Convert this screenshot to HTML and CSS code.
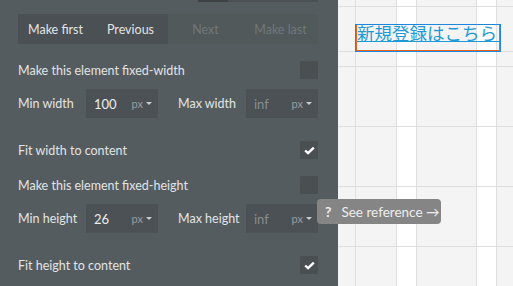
FILE: index.html
```html
<!DOCTYPE html>
<html lang="ja">
<head>
  <meta charset="UTF-8" />
  <title>Layout</title>
  <link rel="stylesheet" href="styles.css">
</head>
<body>
  <div class="screen">
    <aside class="panel">
      <div class="topbar">
        <span class="seg dark"></span>
        <span class="seg"></span>
      </div>

      <div class="btngroup">
        <div class="half on">
          <span class="btn">Make first</span>
          <span class="btn">Previous</span>
        </div>
        <div class="half off">
          <span class="btn">Next</span>
          <span class="btn">Make last</span>
        </div>
      </div>

      <div class="row check first">
        <span>Make this element fixed-width</span>
        <span class="box"></span>
      </div>
      <div class="row field">
        <span class="lbl">Min width</span>
        <span class="input"><span class="val">100</span><span class="unit">px <i class="caret"></i></span></span>
        <span class="lbl second">Max width</span>
        <span class="input"><span class="val ph">inf</span><span class="unit">px <i class="caret"></i></span></span>
      </div>
      <div class="row check after-field">
        <span>Fit width to content</span>
        <span class="box"><svg viewBox="0 0 12 10" width="11" height="9"><path d="M1.2 5 L4.4 8 L10.8 1.8" fill="none" stroke="#fff" stroke-width="2.6"/></svg></span>
      </div>
      <div class="row check">
        <span>Make this element fixed-height</span>
        <span class="box"></span>
      </div>
      <div class="row field">
        <span class="lbl">Min height</span>
        <span class="input"><span class="val">26</span><span class="unit">px <i class="caret"></i></span></span>
        <span class="lbl second">Max height</span>
        <span class="input"><span class="val ph">inf</span><span class="unit">px <i class="caret"></i></span></span>
      </div>
      <div class="row check after-field">
        <span>Fit height to content</span>
        <span class="box"><svg viewBox="0 0 12 10" width="11" height="9"><path d="M1.2 5 L4.4 8 L10.8 1.8" fill="none" stroke="#fff" stroke-width="2.6"/></svg></span>
      </div>
    </aside>

    <section class="canvas">
      <div class="element">
        <div class="inner"><span class="jp">新規登録はこちら</span></div>
      </div>
    </section>

    <div class="tip"><b>?</b> See reference &rarr;</div>
  </div>
</body>
</html>
```

FILE: styles.css
```css
body {
  margin: 0;
  font-family: Lato, "Open Sans", sans-serif;
  font-size: 12.5px;
  color: #e2e4e5;
}
.screen {
  position: relative;
  display: flex;
  width: 513px;
  height: 286px;
  overflow: hidden;
}
.panel {
  width: 338px;
  flex: none;
  background: #555c5f;
  padding: 0 20px 0 18px;
  box-sizing: border-box;
}
.topbar {
  display: flex;
  height: 2px;
  margin-left: 180px;
}
.seg { flex: 1; background: #4a5053; }
.seg.dark { flex: none; width: 30px; background: #3e4244; }

.btngroup {
  display: flex;
  height: 30px;
  margin-top: 12px;
  background: #52595b;
  border-radius: 2px;
}
.half {
  display: flex;
}
.btn {
  width: 75px;
  display: flex;
  align-items: center;
  justify-content: center;
}
.half.on { background: #4a5053; color: #e2e4e5; }
.half.off { color: #70777a; }

.row {
  display: flex;
  align-items: center;
}
.check {
  height: 18px;
  justify-content: space-between;
  margin-top: 17px;
}
.check.after-field { margin-top: 23px; }
.box {
  width: 18px;
  height: 18px;
  background: #4a4f52;
  border-radius: 1px;
  display: flex;
  align-items: center;
  justify-content: center;
}
.field {
  height: 29px;
  margin-top: 10px;
}
.lbl { width: 68px; }
.lbl.second { margin-left: 20px; }
.input {
  width: 72px;
  height: 29px;
  background: #4b5154;
  display: flex;
  align-items: center;
  justify-content: space-between;
  padding: 0 6px 0 8px;
  box-sizing: border-box;
  font-size: 13px;
}
.val { color: #eceeef; }
.val.ph { color: #868d90; }
.unit {
  color: #979ea1;
  font-size: 11px;
  display: flex;
  align-items: center;
}
.caret {
  display: inline-block;
  margin-left: 3px;
  border-left: 3px solid transparent;
  border-right: 3px solid transparent;
  border-top: 3px solid #c9cdcf;
}

.canvas {
  position: relative;
  flex: 1;
  background-color: #f4f4f4;
  background-image:
    linear-gradient(#dedede, #dedede),
    linear-gradient(#dedede, #dedede),
    linear-gradient(#dedede, #dedede),
    linear-gradient(#dedede, #dedede),
    linear-gradient(#dedede, #dedede),
    linear-gradient(#dedede, #dedede),
    linear-gradient(#dedede, #dedede),
    linear-gradient(#dedede, #dedede),
    linear-gradient(#dedede, #dedede),
    linear-gradient(#dedede, #dedede),
    linear-gradient(#dedede, #dedede),
    linear-gradient(#fff, #fff),
    linear-gradient(#fff, #fff);
  background-repeat: no-repeat;
  background-size:
    100% 1px, 100% 1px, 100% 1px, 100% 1px, 100% 1px, 100% 1px,
    1px 100%, 1px 100%, 1px 100%, 1px 100%, 1px 100%,
    20px 100%, 20px 100%;
  background-position:
    0 6px, 0 51px, 0 66px, 0 126px, 0 186px, 0 246px,
    17px 0, 58px 0, 78px 0, 138px 0, 158px 0,
    58px 0, 138px 0;
}
.element {
  position: absolute;
  left: 17px;
  top: 24px;
  width: 146px;
  height: 28px;
  border: 1px solid #1e86dc;
  box-sizing: border-box;
}
.inner {
  height: 100%;
  border: 1px solid #e8661e;
  border-top: none;
  box-sizing: border-box;
}
.jp {
  display: block;
  font-family: "Noto Sans CJK JP", sans-serif;
  font-size: 17.5px;
  line-height: 16px;
  color: #1f9ad6;
  white-space: nowrap;
  border-bottom: 1px solid #1f9ad6;
}

.tip {
  position: absolute;
  left: 317px;
  top: 199px;
  width: 124px;
  height: 25px;
  background: #858585;
  border-radius: 4px;
  color: #eeeeee;
  font-size: 13.5px;
  display: flex;
  align-items: center;
  padding-left: 8px;
  box-sizing: border-box;
}
.tip b { margin-right: 10px; font-size: 14px; }
```
